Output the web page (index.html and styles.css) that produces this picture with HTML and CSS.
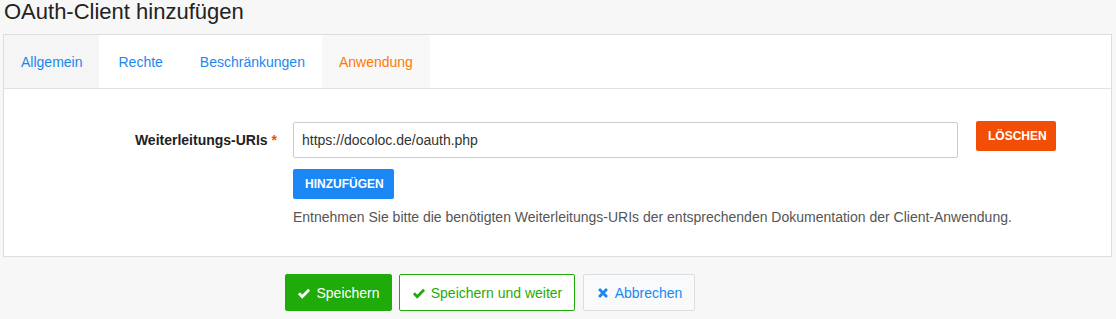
FILE: index.html
```html
<!DOCTYPE html>
<html lang="de">
  <head>
    <meta charset="UTF-8" />
    <title>OAuth-Client hinzufügen</title>
    <link rel="stylesheet" href="styles.css">
  </head>
  <body>
    <h1 class="page-title">OAuth-Client hinzufügen</h1>

    <!-- Formular mit Reitern -->
    <div class="panel">
      <ul class="tabs">
        <li class="tab tab-grey">Allgemein</li>
        <li class="tab tab-wide">Rechte</li>
        <li class="tab">Beschränkungen</li>
        <li class="tab tab-grey tab-active">Anwendung</li>
      </ul>

      <div class="panel-body">
        <div class="form-row">
          <label class="form-label" for="uri0">Weiterleitungs-URIs <span class="required">*</span></label>
          <div class="form-field">
            <div class="uri-row">
              <input type="text" id="uri0" class="text-input" value="https://docoloc.de/oauth.php" />
              <button class="btn btn-delete">LÖSCHEN</button>
            </div>
            <button class="btn btn-add">HINZUFÜGEN</button>
            <p class="help-text">Entnehmen Sie bitte die benötigten Weiterleitungs-URIs der entsprechenden Dokumentation der Client-Anwendung.</p>
          </div>
        </div>
      </div>
    </div>

    <!-- Aktionen -->
    <div class="actions">
      <button class="btn-action btn-save">
        <svg class="icon" viewBox="0 0 16 16"><path d="M2.2 8.4 L6 12.2 L13.8 4.4" /></svg>
        Speichern
      </button>
      <button class="btn-action btn-save-next">
        <svg class="icon" viewBox="0 0 16 16"><path d="M2.2 8.4 L6 12.2 L13.8 4.4" /></svg>
        Speichern und weiter
      </button>
      <button class="btn-action btn-cancel">
        <svg class="icon" viewBox="0 0 16 16"><path d="M3.5 3.5 L12.5 12.5 M12.5 3.5 L3.5 12.5" /></svg>
        Abbrechen
      </button>
    </div>
  </body>
</html>
```

FILE: styles.css
```css
* {
  margin: 0;
  padding: 0;
  box-sizing: border-box;
  font-family: "Liberation Sans", Arial, sans-serif;
}

body {
  background: #f7f7f7;
  color: #333;
  font-size: 14px;
}

.page-title {
  font-size: 22px;
  font-weight: normal;
  line-height: 24px;
  color: #222;
  padding: 0 4px;
  margin-bottom: 10px;
}

.panel {
  margin: 0 4px 0 3px;
  background: white;
  border: 1px solid #dddddd;
}

/* Reiter */
.tabs {
  list-style: none;
  display: flex;
  border-bottom: 1px solid #e2e2e2;
}

.tab {
  height: 53px;
  line-height: 55px;
  padding: 0 17px;
  color: #1a87f0;
  font-size: 14px;
}

.tab-wide {
  padding: 0 20px 0 19px;
}

.tab-grey {
  background: #f5f5f5;
}

.tab-active {
  color: #ff7a00;
  background: #f8f8f8;
}

.panel-body {
  padding: 33px 0 29px;
}

.form-row {
  display: grid;
  grid-template-columns: 289px 1fr;
}

.form-label {
  text-align: right;
  padding-right: 16px;
  font-weight: bold;
  line-height: 36px;
  color: #222;
}

.required {
  color: #f24e05;
}

.uri-row {
  display: flex;
  align-items: flex-start;
  gap: 18px;
}

.text-input {
  width: 665px;
  height: 36px;
  border: 1px solid #cccccc;
  border-radius: 2px;
  padding: 0 8px;
  font-size: 14px;
  color: #333;
  outline: none;
}

.btn {
  border: none;
  border-radius: 2px;
  color: white;
  font-size: 12px;
  font-weight: 600;
  height: 30px;
  padding: 0 12px;
  cursor: pointer;
}

.btn-delete {
  background: #f24e05;
  margin-top: -1px;
  width: 80px;
}

.btn-add {
  background: #1a87f5;
  margin-top: 11px;
  width: 101px;
}

.help-text {
  margin-top: 8px;
  line-height: 20px;
  color: #555;
}

/* Speichern / Abbrechen */
.actions {
  display: flex;
  gap: 7px;
  padding: 17px 0 0 285px;
}

.btn-action {
  display: flex;
  align-items: center;
  justify-content: center;
  gap: 5px;
  height: 37px;
  border-radius: 2px;
  font-size: 14px;
  cursor: pointer;
}

.icon {
  width: 14px;
  height: 14px;
  fill: none;
  stroke: currentColor;
  stroke-width: 3.2;
}

.btn-save {
  width: 107px;
  background: #1fab09;
  border: 1px solid #1fab09;
  color: white;
}

.btn-save-next {
  width: 176px;
  background: white;
  border: 1px solid #1fab09;
  color: #1fab09;
}

.btn-cancel {
  width: 112px;
  margin-left: 1px;
  background: #f8fafc;
  border: 1px solid #dddddd;
  color: #1a87f0;
}
```
